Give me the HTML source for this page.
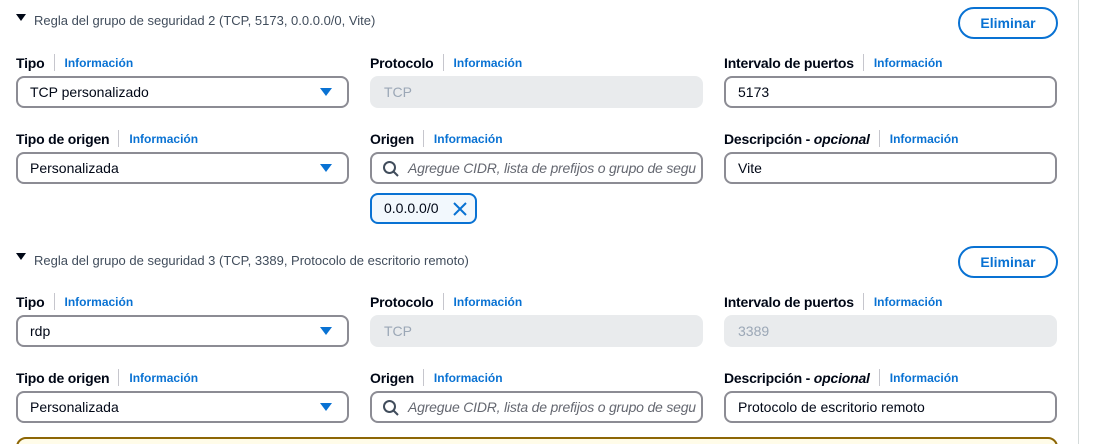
<!DOCTYPE html>
<html><head><meta charset="utf-8"><style>
html,body{margin:0;width:1097px;height:444px;overflow:hidden}
body{background:#fff;font-family:"Liberation Sans",sans-serif;color:#000716;position:relative}
.a{position:absolute}
.hdr{font-size:13px;color:#414d5c;white-space:nowrap}
.tri{position:absolute;width:0;height:0;border-left:5px solid transparent;border-right:5px solid transparent;border-top:7px solid #000716}
.btn{position:absolute;width:96px;height:28px;border:2px solid #0972d3;border-radius:16px;color:#0972d3;font-weight:bold;font-size:14px;text-align:center;line-height:28px;box-sizing:content-box}
.lbl{position:absolute;font-size:14px;font-weight:bold;white-space:nowrap;display:flex;align-items:center;letter-spacing:-0.2px}
.lbl .sep{display:inline-block;width:1px;height:17px;background:#c6c6cd;margin:0 10px 0 9px}
.lbl .i{color:#0972d3;font-size:12px;letter-spacing:0}
.inp{position:absolute;width:333px;height:32px;box-sizing:border-box;border:2px solid #8c8c94;border-radius:8px;font-size:14px;line-height:28px;padding-left:12px;white-space:nowrap;overflow:hidden}
.dis{background:#e9ebed;border-color:#e9ebed;color:#9ba7b6}
.dd::after{content:"";position:absolute;right:15px;top:10px;border-left:6px solid transparent;border-right:6px solid transparent;border-top:8px solid #0972d3}
.ph{color:#656871;font-style:italic;padding-left:36px;letter-spacing:-0.2px}
.ph svg{position:absolute;left:10px;top:6px}
</style></head><body>
<div class="a" style="left:1078px;top:0;width:1px;height:444px;background:#d5dbdb"></div>

<div class="tri" style="left:16px;top:14px"></div>
<div class="a hdr" style="left:34px;top:13px">Regla del grupo de seguridad 2 (TCP, 5173, 0.0.0.0/0, Vite)</div>
<div class="btn" style="left:958px;top:7px">Eliminar</div>

<div class="lbl" style="left:16px;top:54px">Tipo<span class="sep"></span><span class="i">Información</span></div>
<div class="lbl" style="left:370px;top:54px">Protocolo<span class="sep"></span><span class="i">Información</span></div>
<div class="lbl" style="left:724px;top:54px">Intervalo de puertos<span class="sep"></span><span class="i">Información</span></div>
<div class="inp dd" style="left:16px;top:76px">TCP personalizado</div>
<div class="inp dis" style="left:370px;top:76px">TCP</div>
<div class="inp" style="left:724px;top:76px">5173</div>

<div class="lbl" style="left:16px;top:130px">Tipo de origen<span class="sep"></span><span class="i">Información</span></div>
<div class="lbl" style="left:370px;top:130px">Origen<span class="sep"></span><span class="i">Información</span></div>
<div class="lbl" style="left:724px;top:130px">Descripción -&nbsp;<i>opcional</i><span class="sep"></span><span class="i">Información</span></div>
<div class="inp dd" style="left:16px;top:152px">Personalizada</div>
<div class="inp ph" style="left:370px;top:152px"><svg width="18" height="18" viewBox="0 0 18 18"><circle cx="7.5" cy="7.5" r="5.5" fill="none" stroke="#414d5c" stroke-width="2"/><path d="M11.5 11.5L16 16" stroke="#414d5c" stroke-width="2"/></svg>Agregue CIDR, lista de prefijos o grupo de segu</div>
<div class="inp" style="left:724px;top:152px">Vite</div>
<div class="a" style="left:370px;top:193px;width:107px;height:31px;box-sizing:border-box;border:2px solid #0972d3;border-radius:8px;background:#f2f8fd;font-size:14px;line-height:27px;padding-left:12px">0.0.0.0/0<svg style="position:absolute;left:81px;top:7px" width="14" height="14" viewBox="0 0 14 14"><path d="M1 1L13 13M13 1L1 13" stroke="#0972d3" stroke-width="2"/></svg></div>

<div class="tri" style="left:16px;top:253px"></div>
<div class="a hdr" style="left:34px;top:253px">Regla del grupo de seguridad 3 (TCP, 3389, Protocolo de escritorio remoto)</div>
<div class="btn" style="left:958px;top:246px">Eliminar</div>

<div class="lbl" style="left:16px;top:293px">Tipo<span class="sep"></span><span class="i">Información</span></div>
<div class="lbl" style="left:370px;top:293px">Protocolo<span class="sep"></span><span class="i">Información</span></div>
<div class="lbl" style="left:724px;top:293px">Intervalo de puertos<span class="sep"></span><span class="i">Información</span></div>
<div class="inp dd" style="left:16px;top:315px">rdp</div>
<div class="inp dis" style="left:370px;top:315px">TCP</div>
<div class="inp dis" style="left:724px;top:315px">3389</div>

<div class="lbl" style="left:16px;top:369px">Tipo de origen<span class="sep"></span><span class="i">Información</span></div>
<div class="lbl" style="left:370px;top:369px">Origen<span class="sep"></span><span class="i">Información</span></div>
<div class="lbl" style="left:724px;top:369px">Descripción -&nbsp;<i>opcional</i><span class="sep"></span><span class="i">Información</span></div>
<div class="inp dd" style="left:16px;top:391px">Personalizada</div>
<div class="inp ph" style="left:370px;top:391px"><svg width="18" height="18" viewBox="0 0 18 18"><circle cx="7.5" cy="7.5" r="5.5" fill="none" stroke="#414d5c" stroke-width="2"/><path d="M11.5 11.5L16 16" stroke="#414d5c" stroke-width="2"/></svg>Agregue CIDR, lista de prefijos o grupo de segu</div>
<div class="inp" style="left:724px;top:391px">Protocolo de escritorio remoto</div>

<div class="a" style="left:16px;top:437px;width:1042px;height:20px;box-sizing:border-box;border:2px solid #8d6605;border-radius:12px;background:#fffce9"></div>
</body></html>
